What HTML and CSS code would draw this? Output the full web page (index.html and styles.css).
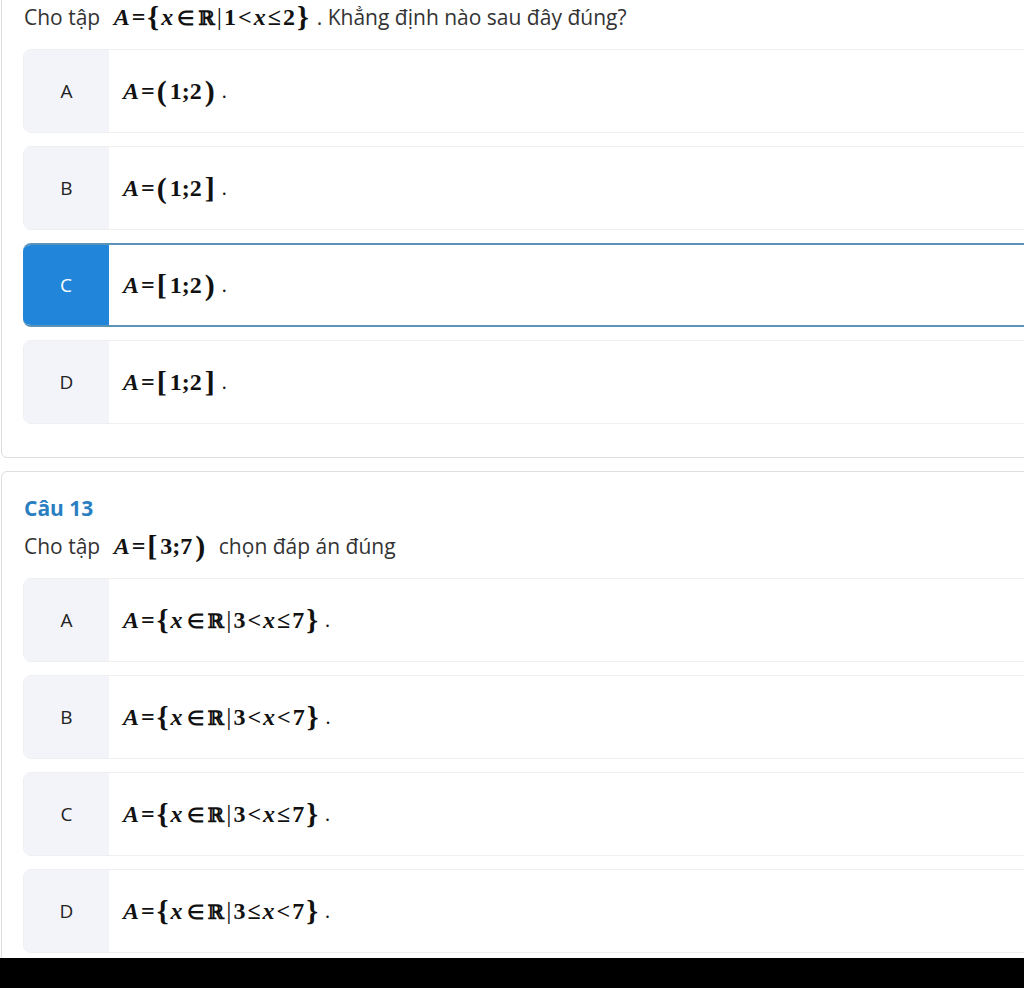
FILE: index.html
```html
<!DOCTYPE html>
<html lang="vi">
<head>
    <meta charset="UTF-8">
    <meta name="viewport" content="width=device-width, initial-scale=1.0">
    <title>Câu hỏi trắc nghiệm</title>
    <link rel="stylesheet" href="styles.css">
</head>
<body>

    <div class="page">
        <!-- câu 12 (phần trên bị cắt) -->
        <div class="card card-top">
            <p class="question">Cho tập <span class="math"><i>A</i>=<span class="br">{</span><i>x</i><span class="in">∈</span><span class="dbl">ℝ</span><span class="bar">|</span>1&lt;<i>x</i>≤2<span class="br">}</span></span>. Khẳng định nào sau đây đúng?</p>

            <div class="options">
                <div class="option">
                    <div class="letter">A</div>
                    <div class="answer"><span class="math"><i>A</i>=<span class="br">(</span><span class="num">1;2</span><span class="br">)</span></span> .</div>
                </div>
                <div class="option">
                    <div class="letter">B</div>
                    <div class="answer"><span class="math"><i>A</i>=<span class="br">(</span><span class="num">1;2</span><span class="br">]</span></span> .</div>
                </div>
                <div class="option selected">
                    <div class="letter">C</div>
                    <div class="answer"><span class="math"><i>A</i>=<span class="br">[</span><span class="num">1;2</span><span class="br">)</span></span> .</div>
                </div>
                <div class="option">
                    <div class="letter">D</div>
                    <div class="answer"><span class="math"><i>A</i>=<span class="br">[</span><span class="num">1;2</span><span class="br">]</span></span> .</div>
                </div>
            </div>
        </div>

        <!-- câu 13 -->
        <div class="card">
            <h3 class="title">Câu 13</h3>
            <p class="question">Cho tập <span class="math"><i>A</i>=<span class="br">[</span><span class="num">3;7</span><span class="br">)</span></span> chọn đáp án đúng</p>

            <div class="options">
                <div class="option">
                    <div class="letter">A</div>
                    <div class="answer"><span class="math"><i>A</i>=<span class="br">{</span><i>x</i><span class="in">∈</span><span class="dbl">ℝ</span><span class="bar">|</span>3&lt;<i>x</i>≤7<span class="br">}</span></span> .</div>
                </div>
                <div class="option">
                    <div class="letter">B</div>
                    <div class="answer"><span class="math"><i>A</i>=<span class="br">{</span><i>x</i><span class="in">∈</span><span class="dbl">ℝ</span><span class="bar">|</span>3&lt;<i>x</i>&lt;7<span class="br">}</span></span> .</div>
                </div>
                <div class="option">
                    <div class="letter">C</div>
                    <div class="answer"><span class="math"><i>A</i>=<span class="br">{</span><i>x</i><span class="in">∈</span><span class="dbl">ℝ</span><span class="bar">|</span>3&lt;<i>x</i>≤7<span class="br">}</span></span> .</div>
                </div>
                <div class="option">
                    <div class="letter">D</div>
                    <div class="answer"><span class="math"><i>A</i>=<span class="br">{</span><i>x</i><span class="in">∈</span><span class="dbl">ℝ</span><span class="bar">|</span>3≤<i>x</i>&lt;7<span class="br">}</span></span> .</div>
                </div>
            </div>
        </div>
    </div>

    <div class="bottom-bar"></div>

</body>
</html>
```

FILE: styles.css
```css
body {
    font-family: "Open Sans", Arial, sans-serif;
    background-color: #fff;
    color: #333;
    margin: 0;
    height: 988px;
    overflow: hidden;
    display: flex;
    flex-direction: column;
}
.page {
    height: 958px;
    overflow: hidden;
    padding-left: 1px;
}
.bottom-bar {
    height: 30px;
    background: #000;
}
.card {
    width: 1100px;
    background: white;
    border: 1px solid #dedede;
    border-radius: 6px;
    padding: 22px 0 33px 21px;
    margin-bottom: 13px;
}
.card-top {
    margin-top: -20px;
}
.title {
    margin: 0 0 10px 1px;
    font-size: 21px;
    line-height: 28px;
    font-weight: 700;
    color: #2b7fc1;
}
.question {
    margin: 0 0 17px 1px;
    font-size: 21px;
    line-height: 28px;
    color: #333;
}
.card .title + .question {
    margin-bottom: 18px;
}
.options {
    display: flex;
    flex-direction: column;
    gap: 13px;
}
.option {
    display: flex;
    height: 84px;
    box-sizing: border-box;
    border: 1px solid #efeff2;
    border-radius: 8px;
    overflow: hidden;
}
.letter {
    width: 85px;
    flex-shrink: 0;
    background: #f3f4fa;
    display: flex;
    align-items: center;
    justify-content: center;
    font-size: 19px;
    color: #222;
}
.answer {
    display: flex;
    align-items: center;
    padding-left: 14px;
    font-family: "Liberation Serif", "Times New Roman", serif;
    font-size: 20px;
    color: #111;
    white-space: pre;
}
.option.selected {
    border: 2px solid #5b93b8;
    border-left: none;
}
.option.selected .letter {
    width: 86px;
    background: #2186d9;
    color: #fff;
    margin-top: -2px;
    margin-bottom: -2px;
}
.math {
    font-family: "Liberation Serif", "Times New Roman", serif;
    font-weight: 700;
    font-size: 24px;
    color: #111;
    letter-spacing: 2px;
}
.question .math {
    margin: 0 6px 0 8px;
}
.math i {
    font-style: italic;
}
.num {
    letter-spacing: 0;
    margin: 0 3px 0 1px;
}
.br {
    font-size: 30px;
    font-weight: 700;
    vertical-align: -2px;
}
.bar {
    font-weight: 400;
    font-size: 26px;
}
.in {
    font-size: 20px;
    margin: 0 2px;
}
.dbl {
    font-family: "DejaVu Serif", serif;
    font-size: 20px;
}
```
